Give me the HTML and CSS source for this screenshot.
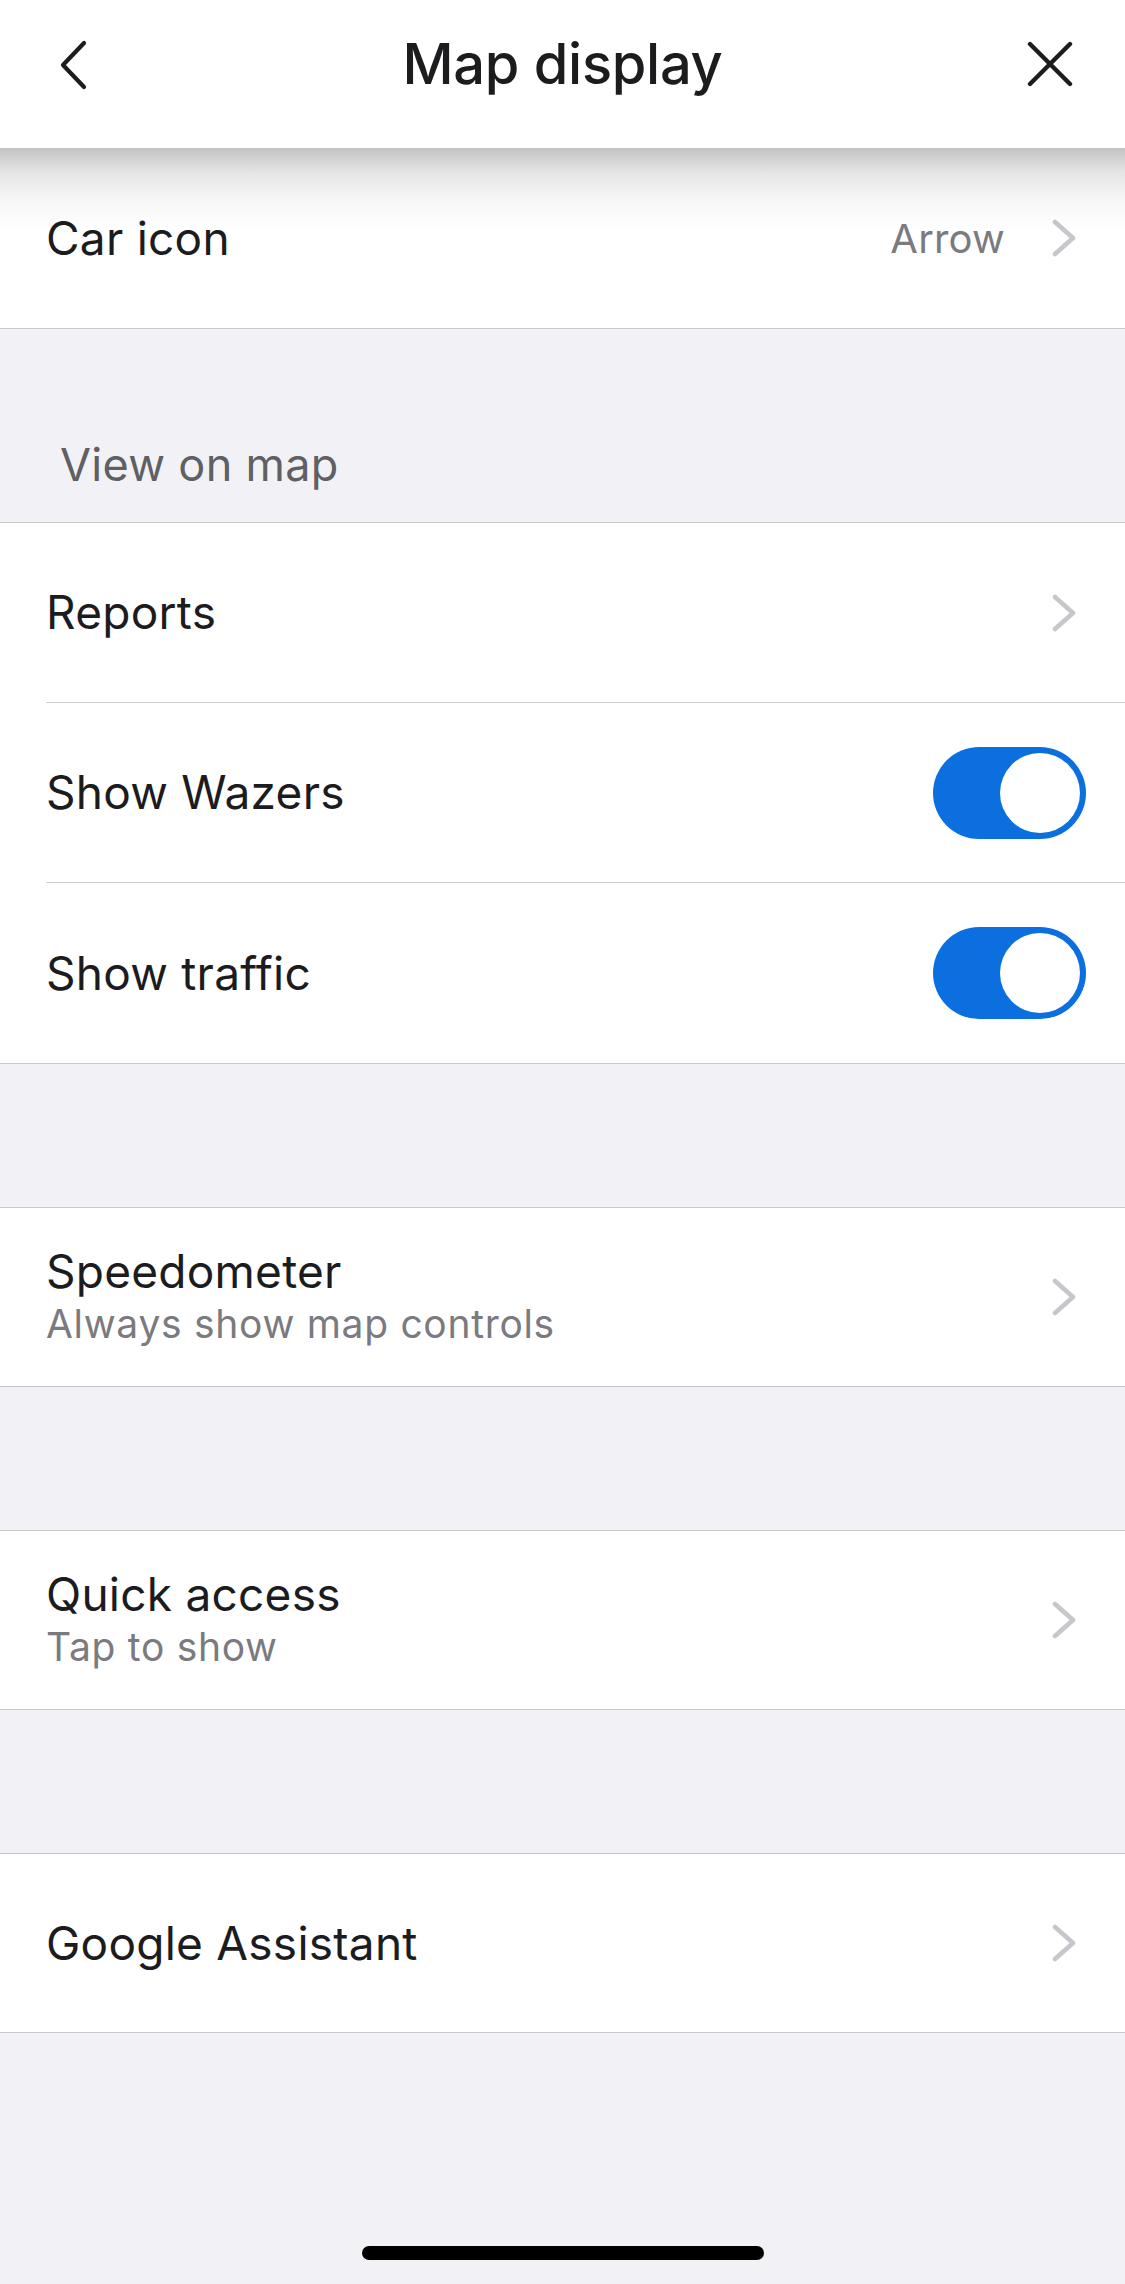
FILE: index.html
```html
<!DOCTYPE html>
<html lang="en">
<head>
<meta charset="utf-8">
<title>Map display</title>
<link rel="stylesheet" href="styles.css">
</head>
<body>
<div class="page">
  <header class="nav">
    <div class="nav-btn nav-left">
      <svg class="ico-back" width="30" height="50" viewBox="0 0 30 50"><path d="M25 3 L4 25 L25 47" fill="none" stroke="#1c1c1e" stroke-width="4.2" stroke-linecap="round" stroke-linejoin="round"/></svg>
    </div>
    <h1 class="nav-title">Map display</h1>
    <div class="nav-btn nav-right">
      <svg class="ico-close" width="46" height="46" viewBox="0 0 46 46"><path d="M3 3 L43 43 M43 3 L3 43" fill="none" stroke="#1c1c1e" stroke-width="4.4" stroke-linecap="round"/></svg>
    </div>
  </header>
  <div class="nav-shadow"></div>

  <section class="group group-first">
    <div class="row">
      <div class="row-inner">
        <span class="row-title">Car icon</span>
        <span class="row-value">Arrow</span>
        <svg class="chev" width="26" height="38" viewBox="0 0 26 38"><path d="M4 3 L22 19 L4 35" fill="none" stroke="#c7c7cb" stroke-width="4.6" stroke-linecap="round" stroke-linejoin="round"/></svg>
      </div>
    </div>
  </section>

  <div class="section-head">View on map</div>

  <section class="group">
    <div class="row">
      <div class="row-inner sep">
        <span class="row-title">Reports</span>
        <svg class="chev" width="26" height="38" viewBox="0 0 26 38"><path d="M4 3 L22 19 L4 35" fill="none" stroke="#c7c7cb" stroke-width="4.6" stroke-linecap="round" stroke-linejoin="round"/></svg>
      </div>
    </div>
    <div class="row">
      <div class="row-inner sep">
        <span class="row-title">Show Wazers</span>
        <span class="toggle on"><span class="knob"></span></span>
      </div>
    </div>
    <div class="row">
      <div class="row-inner">
        <span class="row-title">Show traffic</span>
        <span class="toggle on"><span class="knob"></span></span>
      </div>
    </div>
  </section>

  <div class="gap"></div>

  <section class="group">
    <div class="row">
      <div class="row-inner two">
        <div class="texts">
          <span class="row-title">Speedometer</span>
          <span class="row-sub">Always show map controls</span>
        </div>
        <svg class="chev" width="26" height="38" viewBox="0 0 26 38"><path d="M4 3 L22 19 L4 35" fill="none" stroke="#c7c7cb" stroke-width="4.6" stroke-linecap="round" stroke-linejoin="round"/></svg>
      </div>
    </div>
  </section>

  <div class="gap"></div>

  <section class="group">
    <div class="row">
      <div class="row-inner two">
        <div class="texts">
          <span class="row-title">Quick access</span>
          <span class="row-sub">Tap to show</span>
        </div>
        <svg class="chev" width="26" height="38" viewBox="0 0 26 38"><path d="M4 3 L22 19 L4 35" fill="none" stroke="#c7c7cb" stroke-width="4.6" stroke-linecap="round" stroke-linejoin="round"/></svg>
      </div>
    </div>
  </section>

  <div class="gap"></div>

  <section class="group">
    <div class="row">
      <div class="row-inner two">
        <span class="row-title">Google Assistant</span>
        <svg class="chev" width="26" height="38" viewBox="0 0 26 38"><path d="M4 3 L22 19 L4 35" fill="none" stroke="#c7c7cb" stroke-width="4.6" stroke-linecap="round" stroke-linejoin="round"/></svg>
      </div>
    </div>
  </section>

  <footer class="home">
    <span class="home-bar"></span>
  </footer>
</div>
</body>
</html>
```

FILE: styles.css
```css
* { box-sizing: border-box; }

html, body {
  margin: 0;
  padding: 0;
}

body {
  background: #f2f2f6;
  font-family: Inter, "Noto Sans", "Liberation Sans", sans-serif;
  color: #1c1c1e;
}

.page {
  width: 1125px;
  min-height: 2284px;
  display: flex;
  flex-direction: column;
  position: relative;
  overflow: hidden;
}

.nav {
  height: 148px;
  background: #ffffff;
  display: grid;
  grid-template-columns: 160px 1fr 160px;
  align-items: center;
  padding: 0 0 20px 0;
  position: relative;
  z-index: 2;
}

.nav-btn {
  display: flex;
  align-items: center;
  height: 100%;
}

.nav-left {
  padding-left: 59px;
  padding-top: 1px;
}

.nav-right {
  justify-content: flex-end;
  padding-right: 52px;
}

.nav-title {
  margin: 0;
  text-align: center;
  font-size: 56px;
  font-weight: 500;
  letter-spacing: -0.3px;
  color: #1c1c1e;
  line-height: 1;
}

.nav-shadow {
  position: absolute;
  left: 0;
  top: 148px;
  width: 1125px;
  height: 82px;
  background: linear-gradient(to bottom, rgba(0,0,0,0.24) 0%, rgba(0,0,0,0.1) 30%, rgba(0,0,0,0.03) 65%, rgba(0,0,0,0) 100%);
  z-index: 3;
  pointer-events: none;
}

.group {
  background: #ffffff;
  border-top: 1px solid #c9c9cd;
  border-bottom: 1px solid #c9c9cd;
}

.group-first {
  border-top: none;
}

.row {
  padding-left: 46px;
}

.row-inner {
  height: 180px;
  display: flex;
  align-items: center;
  padding-right: 48px;
}

.row-inner.sep {
  height: 180px;
  border-bottom: 1px solid #cfcfd2;
}

.row-inner.two {
  height: 178px;
}

.row-title {
  font-size: 46px;
  font-weight: 400;
  letter-spacing: 0.25px;
  color: #1c1c1e;
  flex: 1;
  line-height: 1.1;
}

.texts {
  flex: 1;
  display: flex;
  flex-direction: column;
  padding-bottom: 2px;
}

.texts .row-title {
  line-height: 56px;
}

.row-sub {
  font-size: 39px;
  color: #7a7a7f;
  letter-spacing: 0.7px;
  line-height: 50px;
}

.row-value {
  font-size: 40px;
  color: #7a7a7f;
  margin-right: 46px;
  letter-spacing: 0.2px;
}

.chev {
  display: block;
  flex: none;
}

.section-head {
  height: 193px;
  padding: 0 0 35px 60px;
  display: flex;
  align-items: flex-end;
  font-size: 45px;
  color: #5f5f64;
  letter-spacing: 0.3px;
  line-height: 1;
}

.gap {
  height: 143px;
}

.toggle {
  flex: none;
  width: 153px;
  height: 92px;
  border-radius: 46px;
  background: #0b6fe0;
  display: flex;
  align-items: center;
  justify-content: flex-end;
  padding-right: 6px;
  margin-right: -9px;
}

.knob {
  width: 80px;
  height: 80px;
  border-radius: 50%;
  background: #ffffff;
}

.home {
  margin-top: auto;
  display: flex;
  justify-content: center;
  padding-bottom: 24px;
}

.home-bar {
  width: 402px;
  height: 14px;
  border-radius: 7px;
  background: #000000;
}
```
